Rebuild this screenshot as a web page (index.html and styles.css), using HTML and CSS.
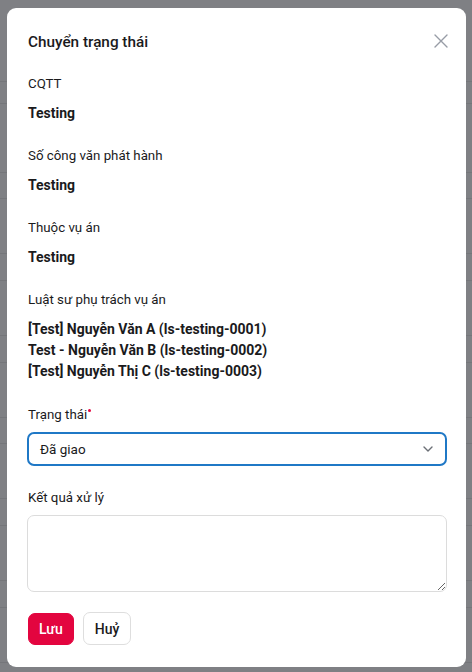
FILE: index.html
```html
<!DOCTYPE html>
<html lang="vi">
<head>
<meta charset="utf-8">
<title>Chuyển trạng thái</title>
<link rel="stylesheet" href="styles.css">
</head>
<body>
<div class="backdrop">
  <div class="row r81"></div>
  <div class="row r22"></div>
  <div class="row r69"></div>
  <div class="row r26"></div>
  <div class="row r55"></div>
  <div class="row r27"></div>
  <div class="row r55"></div>
  <div class="row r27"></div>
  <div class="row r55"></div>
  <div class="row r26"></div>
  <div class="row r55"></div>
  <div class="row r27"></div>
  <div class="row r55"></div>
  <div class="row r27"></div>
  <div class="row r55"></div>
</div>
<div class="modal">
  <button class="close" aria-label="Đóng">
    <svg width="14" height="14" viewBox="0 0 14 14"><path d="M1 1L13 13M13 1L1 13" stroke="#979ca6" stroke-width="1.4" fill="none" stroke-linecap="round"/></svg>
  </button>
  <h2 class="title">Chuyển trạng thái</h2>
  <div class="field">
    <div class="label">CQTT</div>
    <div class="value">Testing</div>
  </div>
  <div class="field">
    <div class="label">Số công văn phát hành</div>
    <div class="value">Testing</div>
  </div>
  <div class="field">
    <div class="label">Thuộc vụ án</div>
    <div class="value">Testing</div>
  </div>
  <div class="field">
    <div class="label">Luật sư phụ trách vụ án</div>
    <div class="value list">
      <div>[Test] Nguyễn Văn A (ls-testing-0001)</div>
      <div>Test - Nguyễn Văn B (ls-testing-0002)</div>
      <div>[Test] Nguyễn Thị C (ls-testing-0003)</div>
    </div>
  </div>
  <div class="form-item">
    <div class="label req-label">Trạng thái<span class="req" aria-label="bắt buộc"></span></div>
    <div class="select">
      <span>Đã giao</span>
      <svg width="10" height="6" viewBox="0 0 10 6"><path d="M1 1L5 5L9 1" stroke="#6b6f76" stroke-width="1.4" fill="none" stroke-linecap="round" stroke-linejoin="round"/></svg>
    </div>
  </div>
  <div class="form-item">
    <div class="label">Kết quả xử lý</div>
    <textarea class="textarea"></textarea>
  </div>
  <div class="actions">
    <button class="btn primary">Lưu</button>
    <button class="btn">Huỷ</button>
  </div>
</div>
</body>
</html>
```

FILE: styles.css
```css
html, body {
  margin: 0;
  padding: 0;
}
body {
  background: #7f8084;
  font-family: Roboto, "Noto Sans", sans-serif;
  color: #1a1a1c;
  height: 672px;
  overflow: hidden;
}
.backdrop {
  display: flex;
  flex-direction: column;
}
.row {
  border-bottom: 1px solid #75767a;
  box-sizing: border-box;
}
.r81 { height: 82px; }
.r22 { height: 22px; }
.r69 { height: 69px; }
.r26 { height: 26px; }
.r27 { height: 27px; }
.r55 { height: 55px; }

.modal {
  position: fixed;
  left: 7px;
  top: 8px;
  width: 459px;
  box-sizing: border-box;
  background: #fff;
  border-radius: 9px;
  padding: 22px 19px 22px 20px;
}
.close {
  position: absolute;
  right: 18px;
  top: 26px;
  width: 14px;
  height: 14px;
  padding: 0;
  border: 0;
  background: none;
  display: block;
}
.close svg { display: block; }
.title {
  margin: 0 0 20px 1px;
  font-size: 15.3px;
  line-height: 24px;
  font-weight: 500;
}
.field {
  margin-bottom: 23px;
  padding-left: 1px;
}
.label {
  font-size: 13.3px;
  line-height: 20px;
  height: 20px;
  font-weight: 400;
}
.value {
  margin-top: 9px;
  font-size: 14px;
  line-height: 20px;
  font-weight: 700;
}
.list {
  line-height: 21px;
}
.form-item .label {
  padding-left: 1px;
}
.req-label {
  display: flex;
  align-items: flex-start;
}
.req {
  width: 3px;
  height: 3px;
  border-radius: 50%;
  background: #e3053f;
  margin: 4px 0 0 1px;
}
.select {
  margin-top: 7px;
  height: 34px;
  box-sizing: border-box;
  border: 2px solid #1f78c6;
  border-radius: 7px;
  display: flex;
  align-items: center;
  justify-content: space-between;
  padding: 0 12px 0 11px;
  font-size: 13.5px;
}
.select svg { display: block; }
.form-item + .form-item {
  margin-top: 22px;
}
.textarea {
  display: block;
  margin-top: 7px;
  width: 420px;
  height: 77px;
  box-sizing: border-box;
  border: 1px solid #dcdcdc;
  border-radius: 7px;
  resize: vertical;
  font-family: inherit;
  font-size: 14px;
}
.actions {
  margin-top: 20px;
  display: flex;
  gap: 9px;
  padding-left: 1px;
}
.btn {
  height: 33px;
  box-sizing: border-box;
  border: 1px solid #dedede;
  border-radius: 7px;
  background: #fff;
  font-family: inherit;
  font-size: 14px;
  font-weight: 500;
  color: #1a1a1c;
  padding: 0 11px;
}
.btn.primary {
  height: 32px;
  margin-top: 1px;
  background: #e3053f;
  border-color: #e3053f;
  color: #fff;
  padding: 0 10px;
}
```
